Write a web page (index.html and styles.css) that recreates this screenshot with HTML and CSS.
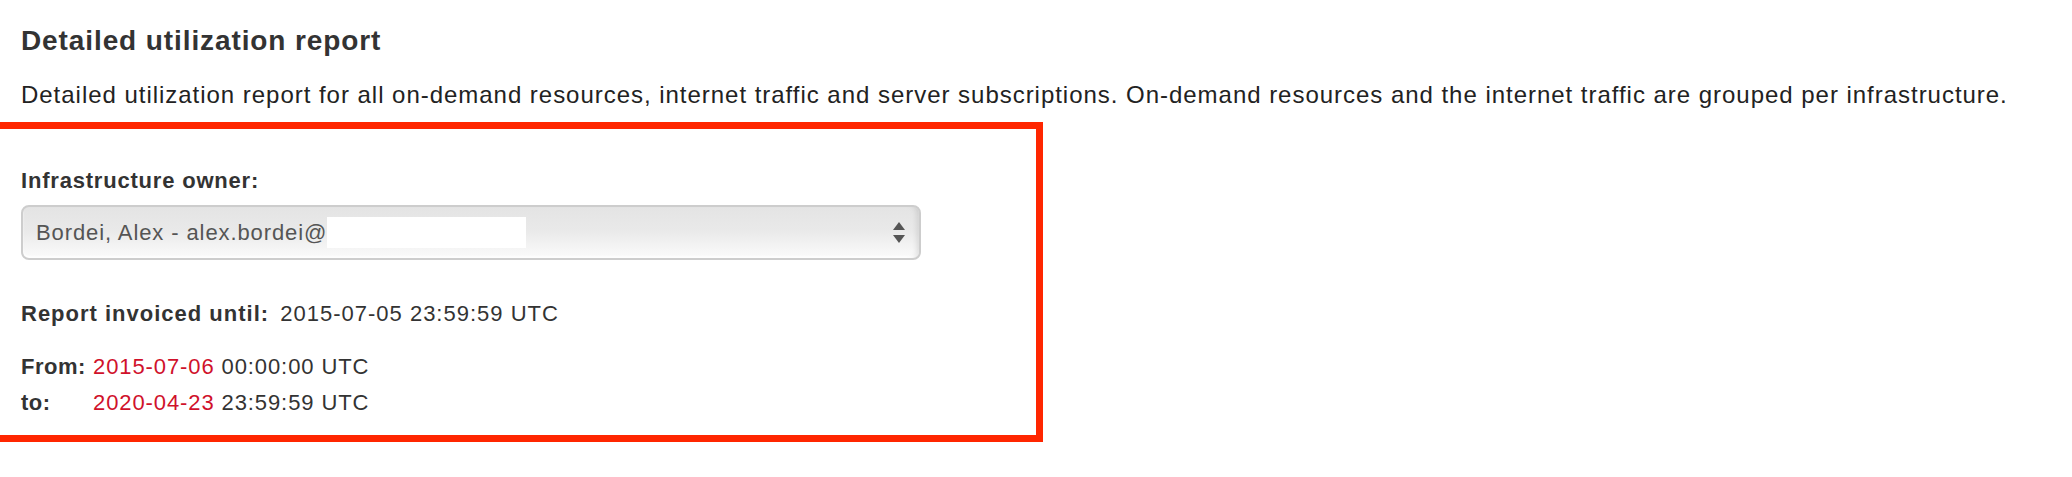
FILE: index.html
```html
<!DOCTYPE html>
<html lang="en">
<head>
<meta charset="utf-8">
<title>Detailed utilization report</title>
<link rel="stylesheet" href="styles.css">
</head>
<body>
<div class="page">
  <h1 class="title">Detailed utilization report</h1>
  <p class="intro">Detailed utilization report for all on-demand resources, internet traffic and server subscriptions. On-demand resources and the internet traffic are grouped per infrastructure.</p>
  <div class="highlight">
    <div class="field-label">Infrastructure owner:</div>
    <div class="select">
      <span class="select-text">Bordei, Alex - alex.bordei@<span class="redact"></span></span>
      <svg class="select-arrows" width="12" height="22" viewBox="0 0 12 22"><polygon points="6,0 12,8 0,8" fill="#555"/><polygon points="0,13 12,13 6,21" fill="#555"/></svg>
    </div>
    <div class="invoiced"><span class="lbl">Report invoiced until:</span> <span class="val">2015-07-05 23:59:59 UTC</span></div>
    <div class="range">
      <div class="range-row"><span class="range-lbl">From:</span><span class="range-val"><span class="date">2015-07-06</span> 00:00:00 UTC</span></div>
      <div class="range-row"><span class="range-lbl">to:</span><span class="range-val"><span class="date">2020-04-23</span> 23:59:59 UTC</span></div>
    </div>
  </div>
</div>
</body>
</html>
```
FILE: styles.css
```css
html, body {
  margin: 0;
  padding: 0;
  background: #fff;
}
body {
  font-family: "Liberation Sans", Arial, Helvetica, sans-serif;
  color: #333;
}
.page {
  padding-left: 21px;
}
.title {
  margin: 0;
  padding-top: 25px;
  font-size: 28px;
  line-height: 32px;
  font-weight: bold;
  letter-spacing: 0.9px;
  color: #333;
}
.intro {
  margin: 23px 0 12px 0;
  font-size: 24px;
  line-height: 30px;
  letter-spacing: 0.97px;
  color: #222;
}
.highlight {
  margin-left: -40px;
  width: 1062px;
  border: 7px solid #ff2600;
  padding: 39px 0 14px 33px;
  box-sizing: border-box;
}
.field-label {
  font-size: 22px;
  line-height: 26px;
  font-weight: bold;
  letter-spacing: 0.8px;
  color: #333;
}
.select {
  margin-top: 11px;
  width: 900px;
  height: 55px;
  box-sizing: border-box;
  border: 2px solid #cdcdcd;
  border-radius: 8px;
  background: linear-gradient(to bottom, #e4e4e4 0%, #e9e9e9 45%, #fbfbfb 100%);
  box-shadow: inset -6px 0 6px -5px rgba(0,0,0,0.15), inset 0 -2px 2px rgba(255,255,255,0.9);
  display: flex;
  align-items: center;
  justify-content: space-between;
  padding: 0 14px 0 13px;
}
.select-text {
  font-size: 22px;
  letter-spacing: 0.9px;
  color: #555;
  display: flex;
  align-items: center;
}
.redact {
  display: inline-block;
  width: 199px;
  height: 31px;
  background: #fff;
}
.invoiced {
  margin-top: 41px;
  font-size: 22px;
  line-height: 26px;
  letter-spacing: 1px;
}
.lbl {
  font-weight: bold;
  margin-right: 4px;
}
.range {
  margin-top: 22px;
  font-size: 22px;
  letter-spacing: 0.9px;
}
.range-row {
  display: flex;
  line-height: 36px;
}
.range-lbl {
  font-weight: bold;
  width: 72px;
  letter-spacing: 0.5px;
}
.date {
  color: #d0112b;
}
```
